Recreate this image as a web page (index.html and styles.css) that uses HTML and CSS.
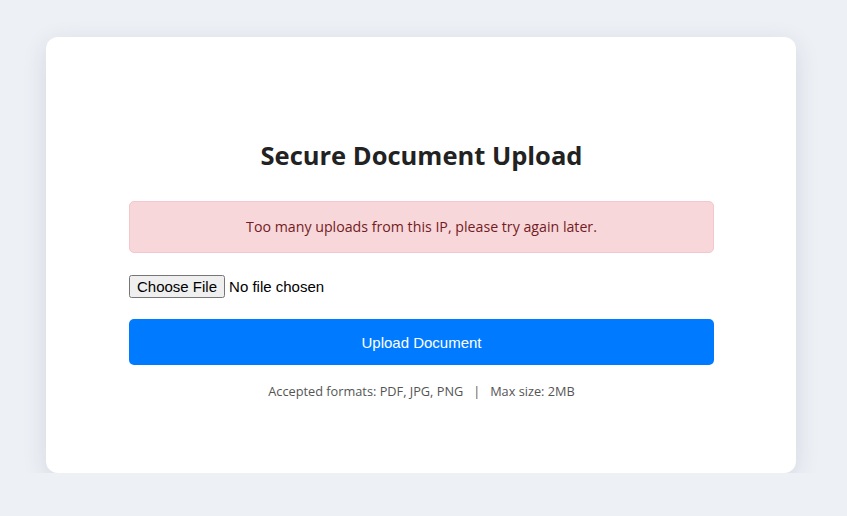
FILE: index.html
```html
<!DOCTYPE html>
<html lang="en">
<head>
<meta charset="utf-8">
<title>Secure Document Upload</title>
<link rel="stylesheet" href="styles.css">
</head>
<body>
<main class="card">
  <h1 class="title">Secure Document Upload</h1>
  <div class="alert">Too many uploads from this IP, please try again later.</div>
  <form class="form">
    <input class="file" type="file" accept=".pdf,.jpg,.png">
    <button class="btn" type="button">Upload Document</button>
  </form>
  <p class="note">Accepted formats: PDF, JPG, PNG &nbsp; | &nbsp; Max size: 2MB</p>
</main>
</body>
</html>
```

FILE: styles.css
```css
html, body {
  margin: 0;
  padding: 0;
}
body {
  background: #edf0f5;
  font-family: "Open Sans", "Noto Sans", sans-serif;
  padding-top: 37px;
}
.card {
  box-sizing: border-box;
  width: 750px;
  height: 436px;
  margin: 0 0 0 46px;
  padding: 100px 82px 0 83px;
  background: #ffffff;
  border-radius: 12px;
  box-shadow: 0 6px 24px rgba(40, 50, 70, 0.12);
}
.title {
  margin: 0;
  font-size: 25.5px;
  line-height: 36px;
  font-weight: 700;
  color: #222;
  text-align: center;
}
.alert {
  margin-top: 28px;
  padding: 14px 10px;
  line-height: 22px;
  font-size: 14.2px;
  color: #721c24;
  background: #f8d7da;
  border: 1px solid #f5c6cb;
  border-radius: 5px;
  text-align: center;
}
.form {
  margin: 22px 0 0;
  display: flex;
  flex-direction: column;
  align-items: stretch;
}
.file {
  align-self: flex-start;
  font-family: "Liberation Sans", Arial, sans-serif;
  font-size: 15px;
  color: #000;
}
.btn {
  margin-top: 21px;
  height: 46px;
  border: none;
  border-radius: 5px;
  background: #007bff;
  color: #fff;
  font-family: "Liberation Sans", Arial, sans-serif;
  font-size: 15px;
}
.note {
  margin: 16px 0 0;
  font-size: 12.75px;
  line-height: 20px;
  color: #555;
  text-align: center;
}
```
